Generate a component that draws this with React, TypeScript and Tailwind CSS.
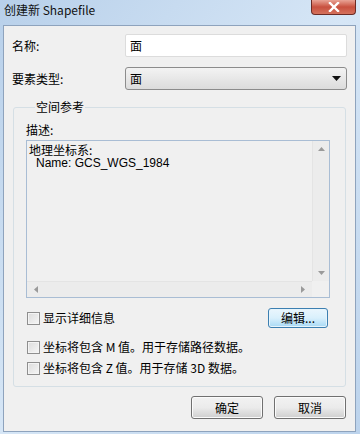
import React from 'react';

const cjk = { fontFamily: '"Noto Sans CJK SC", "Liberation Sans", sans-serif' };

function Check({ label }: { label: React.ReactNode }) {
  return (
    <label className="flex items-center gap-[3px] h-[18px]">
      <span className="w-[13px] h-[13px] border border-[#8f8f8f] bg-gradient-to-br from-[#dcdcdc] to-[#f6f6f6] shadow-[inset_0_0_0_1px_#f4f4f4]" />
      <span className="text-[12px] text-black leading-none">{label}</span>
    </label>
  );
}

function WinButton({ children, className = '' }: { children: React.ReactNode; className?: string }) {
  return (
    <button
      className={`rounded-[3px] border border-[#707070] bg-gradient-to-b from-[#f2f2f2] via-[#ebebeb] to-[#cfcfcf] text-[12px] text-black leading-none shadow-[inset_0_0_0_1px_#fbfbfb] ${className}`}
    >
      {children}
    </button>
  );
}

export default function App() {
  return (
    <div className="w-[360px] h-[434px] bg-gradient-to-br from-[#b8d0ea] via-[#d6e6f6] to-[#bcd3ec] pt-[25px] pl-[3px] pr-[4px] pb-[2px] relative" style={cjk}>
      {/* title bar */}
      <div className="absolute left-[4px] top-[4px] text-[12px] text-[#111] leading-none">创建新 Shapefile</div>
      <div className="absolute left-[311px] top-0 w-[45px] h-[15px] rounded-b-[4px] border border-t-0 border-[#6b2b25] bg-gradient-to-b from-[#e8a396] via-[#c8503f] to-[#d4715c] flex items-center justify-center">
        <svg width="12" height="10" viewBox="0 0 12 10">
          <path d="M2 1 L10 9 M10 1 L2 9" stroke="#fff" strokeWidth="2.4" strokeLinecap="square" />
        </svg>
      </div>

      {/* client */}
      <div className="w-full h-full border border-[#8ea3bd] bg-[#f0f0f0] pl-[8px] pr-[8px] pt-[8px] flex flex-col">
        <div className="flex items-center h-[23px]">
          <span className="w-[113px] text-[12px] text-black">名称:</span>
          <div className="w-[222px] h-[23px] bg-white border border-[#dcdcdc] rounded-[2px] flex items-center pl-[4px] text-[12px] text-black">面</div>
        </div>
        <div className="flex items-center h-[23px] mt-[10px]">
          <span className="w-[113px] text-[12px] text-black">要素类型:</span>
          <div className="w-[222px] h-[23px] border border-[#8c8c8c] rounded-[3px] bg-gradient-to-b from-[#f3f3f3] to-[#dcdcdc] flex items-center pl-[4px] pr-[5px] text-[12px] text-black justify-between">
            <span>面</span>
            <svg width="9" height="5" viewBox="0 0 9 5"><path d="M0 0 H9 L4.5 5 Z" fill="#111" /></svg>
          </div>
        </div>

        <fieldset className="mt-[9px] ml-[1px] w-[333px] h-[288px] border border-[#d5dfe5] rounded-[3px] px-[12px] pt-[0px]">
          <legend className="px-[1px] ml-[9px] text-[12px] text-black leading-[16px]">空间参考</legend>
          <div className="text-[12px] text-black mt-[8px] leading-[14px]">描述:</div>
          <div className="mt-[3px] w-[304px] h-[158px] border border-[#a9bdd4] bg-[#f0f0f0] flex flex-col">
            <div className="flex flex-1">
              <div className="flex-1 pl-[2px] pt-[2px] text-[12px] leading-[14px] text-black">
                <div>地理坐标系:</div>
                <div className="pl-[7px] -mt-[1px]" style={{ fontFamily: '"Liberation Sans", sans-serif' }}>Name: GCS_WGS_1984</div>
              </div>
              <div className="w-[17px] bg-[#ececec] border-l border-[#e4e4e4] flex flex-col justify-between items-center py-[6px]">
                <svg width="7" height="4" viewBox="0 0 7 4"><path d="M0 4 L3.5 0 L7 4 Z" fill="#9a9a9a" /></svg>
                <svg width="7" height="4" viewBox="0 0 7 4"><path d="M0 0 L7 0 L3.5 4 Z" fill="#9a9a9a" /></svg>
              </div>
            </div>
            <div className="flex h-[16px]">
              <div className="flex-1 bg-[#ececec] border-t border-[#e4e4e4] flex items-center justify-between px-[7px]">
                <svg width="4" height="7" viewBox="0 0 4 7"><path d="M4 0 L0 3.5 L4 7 Z" fill="#9a9a9a" /></svg>
                <svg width="4" height="7" viewBox="0 0 4 7"><path d="M0 0 L4 3.5 L0 7 Z" fill="#9a9a9a" /></svg>
              </div>
              <div className="w-[17px] bg-[#f0f0f0]" />
            </div>
          </div>

          <div className="flex items-center justify-between mt-[10px] w-[301px] ml-[1px]">
            <Check label="显示详细信息" />
            <button className="w-[60px] h-[20px] rounded-[3px] border border-[#3c7fb1] bg-gradient-to-b from-[#eaf6fd] via-[#d9f0fc] to-[#a7d9f5] text-[12px] text-black leading-none shadow-[inset_0_0_0_1px_#e6f4fc]">
              编辑...
            </button>
          </div>

          <div className="mt-[10px] ml-[1px] flex flex-col gap-[3px]">
            <Check label="坐标将包含 M 值。用于存储路径数据。" />
            <Check label="坐标将包含 Z 值。用于存储 3D 数据。" />
          </div>
        </fieldset>

        <div className="flex justify-end gap-[11px] mt-[9px] pr-[1px]">
          <WinButton className="w-[72px] h-[23px]">确定</WinButton>
          <WinButton className="w-[72px] h-[23px]">取消</WinButton>
        </div>
      </div>
    </div>
  );
}
